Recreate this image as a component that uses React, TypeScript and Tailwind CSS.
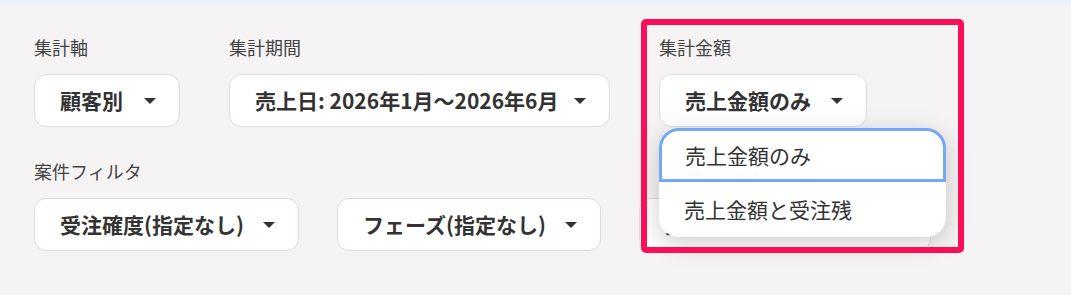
const font = { fontFamily: '"Noto Sans CJK JP", "Noto Sans", sans-serif' }

function Caret() {
  return (
    <svg width="12" height="6" viewBox="0 0 12 6" className="shrink-0">
      <path d="M0 0 L12 0 L6 6 Z" fill="#333333" />
    </svg>
  )
}

function SelectButton({ label, width }: { label: string; width: string }) {
  return (
    <div
      className={`${width} h-[53px] flex items-center justify-between pl-[25px] pr-[23px] bg-white border border-[#dcdcdc] rounded-[12px]`}
    >
      <span className="text-[21px] font-bold text-[#333333] leading-none whitespace-nowrap">{label}</span>
      <Caret />
    </div>
  )
}

function Label({ text }: { text: string }) {
  return <div className="text-[18px] leading-[26px] text-[#444444] h-[26px]">{text}</div>
}

export default function App() {
  return (
    <div className="w-[1071px] h-[295px] bg-[#f5f3f4] overflow-hidden" style={font}>
      <div className="h-[4px] bg-[#e9f1fc]" />
      <div className="pt-[30px] pl-[34px]">
        <div className="flex gap-[49px]">
          <div className="flex flex-col gap-[14px]">
            <Label text="集計軸" />
            <SelectButton label="顧客別" width="w-[146px]" />
          </div>
          <div className="flex flex-col gap-[14px]">
            <Label text="集計期間" />
            <SelectButton label="売上日: 2026年1月〜2026年6月" width="w-[381px]" />
          </div>
          <div className="relative flex flex-col gap-[14px]">
            <Label text="集計金額" />
            <div className="bg-gradient-to-b from-white to-[#f3f3f3] rounded-[12px]">
              <SelectButton label="売上金額のみ" width="w-[208px]" />
            </div>
          </div>
        </div>

        <div className="mt-[31px] flex flex-col gap-[14px]">
          <Label text="案件フィルタ" />
          <div className="flex gap-[38px]">
            <SelectButton label="受注確度(指定なし)" width="w-[265px]" />
            <SelectButton label="フェーズ(指定なし)" width="w-[264px]" />
            <SelectButton label="担当者" width="w-[292px]" />
          </div>
        </div>
      </div>

      {/* open menu for 集計金額 */}
      <div className="absolute left-[659px] top-[128px] w-[287px] h-[109px] bg-white rounded-[20px] shadow-[0_6px_26px_rgba(0,0,0,0.2)]">
        <div className="h-[54px] flex items-center pl-[23px] border-[3px] border-[#76a6f6] rounded-t-[20px]">
          <span className="text-[21px] text-[#333333] leading-none">売上金額のみ</span>
        </div>
        <div className="h-[55px] flex items-center pl-[25px]">
          <span className="text-[21px] text-[#333333] leading-none">売上金額と受注残</span>
        </div>
      </div>

      {/* highlight frame */}
      <div className="absolute left-[641px] top-[19px] w-[323px] h-[234px] border-[6px] border-[#fd0d58] rounded-[5px] pointer-events-none" />
    </div>
  )
}
